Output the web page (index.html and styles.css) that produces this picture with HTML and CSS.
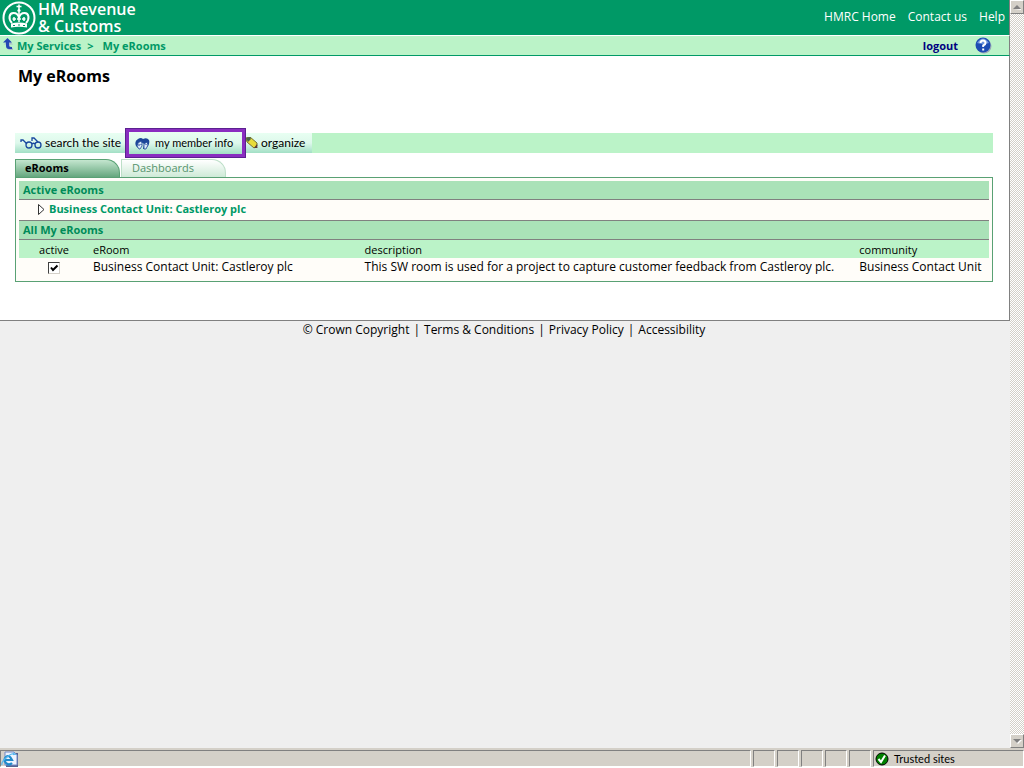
FILE: index.html
```html
<!DOCTYPE html>
<html lang="en">
<head>
<meta charset="utf-8">
<title>My eRooms</title>
<link rel="stylesheet" href="styles.css">
</head>
<body>
<div class="window">
  <div class="viewport">
    <div class="page">
      <header class="banner">
        <a class="brand" href="#">
          <svg class="crest" viewBox="0 0 34 34" width="34" height="34" aria-hidden="true">
            <circle cx="17" cy="17" r="15.5" fill="none" stroke="#fff" stroke-width="2"/>
            <path d="M17 3.500v6M14.500 5.500h5" stroke="#fff" stroke-width="1.600"/>
            <circle cx="17" cy="9.500" r="1.600" fill="#fff"/>
            <path d="M10 22C6 18 7 12 11.500 12Q16 12 17 17Q18 12 22.500 12C27 12 28 18 24 22" fill="none" stroke="#fff" stroke-width="2"/>
            <path d="M17 11v10M12 16v4M22 16v4M10.500 18h3.500M20 18h3.500M15 18h4" stroke="#fff" stroke-width="1.500"/>
            <path d="M9 22.500q8-2 16 0v4q-8-1.500-16 0z" fill="#fff"/>
            <path d="M11 24.500h2m3-.5h2m3 .5h2" stroke="#009966"/>
          </svg>
          <span class="brand-name"><span>HM Revenue</span><span>&amp; Customs</span></span>
        </a>
        <nav class="top-links"><a href="#">HMRC Home</a><a href="#">Contact us</a><a href="#">Help</a></nav>
      </header>
      <div class="crumb-bar">
        <nav class="crumbs">
          <svg viewBox="0 0 10 15" width="10" height="15" aria-hidden="true"><path d="M5.500 2 10 6.500H7V9q0 1.500 3 1v2H7Q4 12 4 9V6.500H1Z" fill="#a9bcc8"/><path d="M4.500 0 9 4.500H6V8q0 1 3 1v2H6Q3 11 3 8V4.500H0Z" fill="#2446b4"/></svg>
          <a href="#">My Services</a><span class="sep">&gt;</span><a href="#">My eRooms</a>
        </nav>
        <div class="session">
          <a href="#">logout</a>
          <a class="help" href="#" aria-label="Help">
            <svg viewBox="0 0 17 17" width="17" height="17"><circle cx="9" cy="9" r="7.500" fill="#99a8b8"/><circle cx="8" cy="8" r="7.500" fill="#1d4cb3"/><path d="M2 6Q8-3 14 6Q8 8 2 6Z" fill="#6f96de"/><path d="M5.500 6Q5.500 3.500 8 3.500T10.500 6Q10.500 7.500 8.200 8.500V10M8.200 11.500v2" fill="none" stroke="#fff" stroke-width="2"/></svg>
          </a>
        </div>
      </div>
      <main class="content">
        <h1>My eRooms</h1>
        <div class="toolbar">
          <button class="tool search" type="button">
            <svg viewBox="0 0 22 12" width="22" height="12" aria-hidden="true"><g fill="none" stroke="#17479e" stroke-width="1.300"><path d="M1 5V3h2L7 7M12 4V1h2l4 4"/><circle cx="9" cy="8" r="3"/><circle cx="18" cy="8" r="3"/><path d="M12 7q1.500-1.500 3 0"/></g></svg>
            search the site</button>
          <button class="tool member" type="button">
            <svg viewBox="0 0 15 13" width="15" height="13" aria-hidden="true"><path d="M1 9Q-1 4 3 2Q6 0 8 2Q12 0 14 3Q15 6 13 9L10 12H8L9 7 6 5 3 6V11Z" fill="#1c4699"/><path d="M3 6 6 4 7 6V9L5 12H4L2 9ZM9 7l3-2 1 3-2 4H9Z" fill="#dce9fa" stroke="#1c4699" stroke-width=".8"/><path d="M4 7v2M6 7v1M11 7v1" stroke="#1c4699"/></svg>
            my member info</button>
          <button class="tool organize" type="button">
            <svg viewBox="0 0 12 12" width="12" height="12" aria-hidden="true"><path d="M0 1 4 0 11 6V9L8 11 1 5Z" fill="#e8dc38" stroke="#76702d"/><path d="M0 1 4 0 5 2 2 5Z" fill="#496648"/><path d="M8 11 11 7 11.500 11Z" fill="#5c3b35"/></svg>
            organize</button>
        </div>
        <div class="tabs" role="tablist">
          <button class="tab current" type="button" role="tab" aria-selected="true">eRooms</button>
          <button class="tab" type="button" role="tab" aria-selected="false">Dashboards</button>
        </div>
        <section class="panel">
          <h2>Active eRooms</h2>
          <div class="active-room">
            <svg viewBox="0 0 7 11" width="7" height="11" aria-hidden="true"><path d="M.5 .5v10l5.500-5z" fill="#fff" stroke="#333"/></svg>
            <a href="#">Business Contact Unit: Castleroy plc</a>
          </div>
          <h2 class="all">All My eRooms</h2>
          <table class="rooms">
            <thead><tr><th class="c-active" id="active">active</th><th class="c-room">eRoom</th><th class="c-desc">description</th><th class="c-comm">community</th></tr></thead>
            <tbody><tr>
              <td class="c-active"><label class="check"><input type="checkbox" checked aria-labelledby="active"><svg viewBox="0 0 12 12" width="12" height="12" aria-hidden="true"><path d="M3 5.500 5 8l4.500-4.500" fill="none" stroke="#000" stroke-width="2"/></svg></label></td>
              <td>Business Contact Unit: Castleroy plc</td>
              <td>This SW room is used for a project to capture customer feedback from Castleroy plc.</td>
              <td>Business Contact Unit</td>
            </tr></tbody>
          </table>
        </section>
      </main>
      <footer class="footer"><span>© Crown Copyright</span><span>|</span><a href="#">Terms &amp; Conditions</a><span>|</span><a href="#">Privacy Policy</a><span>|</span><a href="#">Accessibility</a></footer>
    </div>
    <div class="scrollbar">
      <button type="button" aria-label="Scroll up"><svg viewBox="0 0 8 5" width="8" height="5"><path d="M1 5h7v-1z" fill="#fff"/><path d="M0 4 4 0l4 4z" fill="#808080"/></svg></button>
      <button type="button" aria-label="Scroll down"><svg viewBox="0 0 9 5" width="9" height="5"><path d="M1 1h8L5 5z" fill="#fff"/><path d="M0 0h8L4 4z" fill="#808080"/></svg></button>
    </div>
  </div>
  <div class="status">
    <div class="cell grow"><svg viewBox="0 0 17 16" width="17" height="16" aria-hidden="true"><path d="M5 2h12v14H5z" fill="#566391"/><path d="M4 1h9l3 3v10H4z" fill="#edf3ff" stroke="#7189c7"/><path d="M12 1v3h4" fill="#67b9ed"/><path d="M11 12Q8 15 5 12T5 6t6 3H4" fill="none" stroke="#218acb" stroke-width="2.200"/><path d="M1 14Q0 11 6 6T13 4" fill="none" stroke="#53b7ee" stroke-width="1.200"/></svg></div>
    <div class="cell"></div><div class="cell"></div><div class="cell"></div><div class="cell"></div><div class="cell"></div>
    <div class="cell zone"><svg viewBox="0 0 14 14" width="14" height="14" aria-hidden="true"><circle cx="7" cy="7" r="6" fill="#008000" stroke="#000"/><path d="M3.500 7 6 10l4-6.500" fill="none" stroke="#fff" stroke-width="2"/></svg>Trusted sites</div>
  </div>
</div>
</body>
</html>
```
FILE: styles.css
```css
* { box-sizing: border-box; }
body { margin: 0; background: #efefef; color: #000; font: 12px/16px "Open Sans", "Noto Sans", sans-serif; }
a { color: inherit; text-decoration: none; }
button { font: inherit; color: inherit; border: 0; padding: 0; background: none; }
svg { display: block; flex: none; }
h1, h2 { margin: 0; }
.window { display: flex; flex-direction: column; height: 100vh; border-bottom: 1px solid #fff; }
.viewport { display: flex; flex: 1; min-height: 0; }
.page { flex: 1; min-width: 0; overflow: hidden; }
.banner { display: flex; justify-content: space-between; height: 35px; background: #009966; color: #fff; border-right: 1px solid #808080; }
.brand { display: flex; gap: 2px; padding: 1px 0 0 2px; }
.brand-name { display: flex; flex-direction: column; font: 600 16px/17px "Open Sans", sans-serif; white-space: nowrap; }
.top-links { display: flex; gap: 12px; padding: 9px 4px 0 0; }
.crumb-bar { display: flex; justify-content: space-between; align-items: center; height: 21px; background: #bbf3c8; border-top: 1px solid #fff; border-bottom: 1px solid #009966; border-right: 1px solid #808080; font-size: 11px; font-weight: 700; }
.crumbs { display: flex; align-items: center; gap: 4px; padding-left: 3px; color: #009966; }
.sep { padding: 0 5px 0 2px; }
.session { display: flex; align-items: center; gap: 17px; padding-right: 17px; color: #000080; }
.content { padding: 10px 16px 38px 15px; background: #fff; border-right: 1px solid #808080; border-bottom: 1px solid #808080; }
h1 { padding: 0 0 47px 3px; font-size: 16px; line-height: 20px; }
.toolbar { display: flex; height: 20px; background: #bbf3c8; }
.tool { display: flex; align-items: center; gap: 3px; height: 20px; padding: 0 4px; font: 12px/16px Lato, sans-serif; white-space: nowrap; background: linear-gradient(#e8fff2, #def8ec 50%, #a2dfc5); }
.search { width: 110px; padding-left: 5px; }
.member { width: 121px; height: 30px; margin: -5px 0; padding: 0 6px; gap: 5px; font-size: 11px; border: 4px solid #8a2dc0; outline: 1px solid #5b2190; outline-offset: -1px; }
.organize { padding: 0 7px 0 0; }
.tabs { display: flex; gap: 1px; margin-top: 6px; }
.tab { width: 105px; height: 18px; padding: 0 10px 2px; text-align: left; font-size: 11px; color: #55936c; border: 1px solid #bddfc8; border-bottom: 0; border-radius: 0 14px 0 0; background: linear-gradient(#fff, #ceead7); }
.tab.current { padding-left: 9px; font-weight: 700; color: #000; border-color: #59a174; background: linear-gradient(#c4e6cf, #65a77e); }
.panel { padding: 3px; background: #fffdf9; border: 1px solid #59a174; }
h2 { height: 19px; padding: 0 4px; font-size: 11px; line-height: 18px; color: #008b58; background: #aae2b8; border-bottom: 1px solid #808080; }
.active-room { display: flex; align-items: center; gap: 4px; height: 20px; padding: 0 0 2px 19px; font-size: 11px; font-weight: 700; color: #009966; }
.all { height: 20px; border-top: 1px solid #808080; }
.rooms { width: 100%; border-collapse: collapse; table-layout: fixed; }
.rooms th, .rooms td { padding: 0; text-align: left; font-weight: 400; white-space: nowrap; }
.rooms th { height: 18px; padding-top: 2px; background: #bbf3c8; font-size: 11px; }
.rooms td { height: 20px; padding-top: 1px; vertical-align: top; }
.rooms .c-active { width: 74px; padding-right: 4px; text-align: center; }
.c-room { width: 28%; }
.c-desc { width: 51%; }
.check { display: grid; justify-content: center; padding-top: 3px; }
.check > * { grid-area: 1 / 1; }
.check input { appearance: none; width: 12px; height: 12px; margin: 0; border: 1px solid #404040; border-right-color: #d4d0c8; border-bottom-color: #d4d0c8; background: #fff; }
.check svg { visibility: hidden; pointer-events: none; }
.check input:checked + svg { visibility: visible; }
.footer { display: flex; justify-content: center; gap: 4px; padding: 1px 2px 0 0; }
.scrollbar { display: flex; flex-direction: column; justify-content: space-between; width: 14px; background: repeating-conic-gradient(#d4d0c8 0 25%, #fff 0 50%) 0 0 / 2px 2px; }
.scrollbar button { display: grid; place-items: center; height: 14px; background: #d4d0c8; border: 1px solid #fff; border-right-color: #808080; border-bottom-color: #808080; }
.status { display: flex; gap: 2px; height: 19px; padding-top: 2px; background: #d4d0c8; }
.cell { width: 22px; border: 1px solid #808080; border-right-color: #fff; border-bottom-color: #fff; }
.grow { flex: 1; }
.zone { display: flex; align-items: center; gap: 5px; width: 151px; padding-left: 1px; font: 11px/16px Lato, sans-serif; }
```
